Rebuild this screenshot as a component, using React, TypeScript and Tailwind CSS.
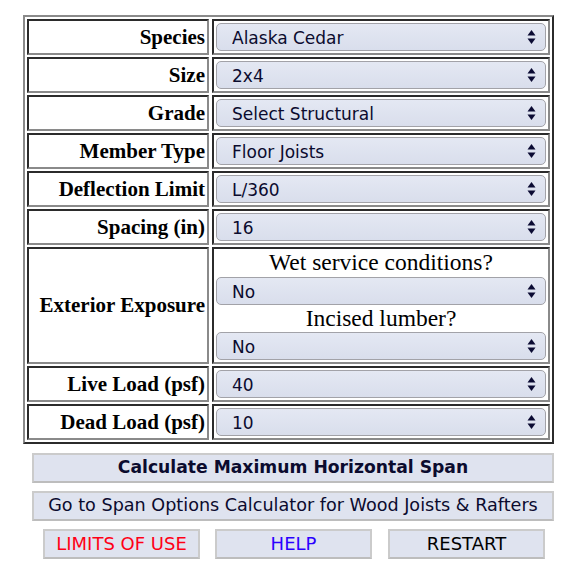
import React, { useState } from 'react';

const serif = { fontFamily: '"Liberation Serif", "Times New Roman", serif' };

const labelCell =
  'flex items-center justify-end pr-[2px] border-2 border-t-[#2b2b2b] border-l-[#2b2b2b] border-r-[#8a8a8a] border-b-[#8a8a8a] bg-white font-bold text-[21px] text-black leading-none';
const fieldCell =
  'flex flex-col p-[2px] border-2 border-t-[#2b2b2b] border-l-[#2b2b2b] border-r-[#8a8a8a] border-b-[#8a8a8a] bg-white';

const Arrows = () => (
  <svg
    className="pointer-events-none absolute right-[10px] top-1/2 -translate-y-1/2"
    width="9"
    height="16"
    viewBox="0 0 9 16"
  >
    <path d="M4.5 1 L8.5 6.5 L0.5 6.5 Z" fill="#0b0b33" />
    <path d="M4.5 15 L8.5 9.5 L0.5 9.5 Z" fill="#0b0b33" />
  </svg>
);

interface SelectProps {
  value: string;
  options: string[];
  onChange: (v: string) => void;
}

const Select: React.FC<SelectProps> = ({ value, options, onChange }) => (
  <div className="relative h-[28px] w-full">
    <select
      value={value}
      onChange={(e) => onChange(e.target.value)}
      className="h-full w-full appearance-none rounded-[5px] border border-[#a2a2a8] bg-gradient-to-b from-[#e4e8f3] to-[#d9deec] pl-[15px] pt-[2px] text-[17px] text-[#0b0b2e] outline-none"
      style={{ fontFamily: '"DejaVu Sans", Verdana, sans-serif' }}
    >
      {options.map((o) => (
        <option key={o} value={o}>
          {o}
        </option>
      ))}
    </select>
    <Arrows />
  </div>
);

const rows = [
  { key: 'species', label: 'Species', options: ['Alaska Cedar', 'Douglas Fir-Larch', 'Hem-Fir', 'Spruce-Pine-Fir'] },
  { key: 'size', label: 'Size', options: ['2x4', '2x6', '2x8', '2x10', '2x12'] },
  { key: 'grade', label: 'Grade', options: ['Select Structural', 'No. 1', 'No. 2', 'No. 3'] },
  { key: 'member', label: 'Member Type', options: ['Floor Joists', 'Ceiling Joists', 'Rafters'] },
  { key: 'deflection', label: 'Deflection Limit', options: ['L/360', 'L/240', 'L/180'] },
  { key: 'spacing', label: 'Spacing (in)', options: ['16', '12', '19.2', '24'] },
];

const loadRows = [
  { key: 'live', label: 'Live Load (psf)', options: ['40', '30', '50'] },
  { key: 'dead', label: 'Dead Load (psf)', options: ['10', '15', '20'] },
];

const btn =
  'h-[30px] border-2 border-[#cbcbcb] border-b-[#bdbdbd] bg-[#dfe3ef] leading-none';

export default function App() {
  const [vals, setVals] = useState<Record<string, string>>({
    species: 'Alaska Cedar',
    size: '2x4',
    grade: 'Select Structural',
    member: 'Floor Joists',
    deflection: 'L/360',
    spacing: '16',
    wet: 'No',
    incised: 'No',
    live: '40',
    dead: '10',
  });
  const set = (k: string) => (v: string) => setVals((s) => ({ ...s, [k]: v }));

  return (
    <div className="min-h-[568px] w-[576px] bg-white pt-[15px]">
      <div
        className="ml-[23px] grid w-[531px] grid-cols-[182px_338px] gap-x-[3px] gap-y-[2px] border-2 border-t-[#8a8a8a] border-l-[#8a8a8a] border-r-[#2b2b2b] border-b-[#2b2b2b] p-[2px]"
        style={serif}
      >
        {rows.map((r) => (
          <React.Fragment key={r.key}>
            <div className={`${labelCell} h-[36px]`}>{r.label}</div>
            <div className={`${fieldCell} h-[36px]`}>
              <Select value={vals[r.key]} options={r.options} onChange={set(r.key)} />
            </div>
          </React.Fragment>
        ))}

        <div className={`${labelCell} h-[117px]`}>Exterior Exposure</div>
        <div className={`${fieldCell} h-[117px] pt-0`}>
          <div className="flex h-[28px] items-center justify-center text-[23.5px] leading-none text-black">
            Wet service conditions?
          </div>
          <Select value={vals.wet} options={['No', 'Yes']} onChange={set('wet')} />
          <div className="flex h-[27px] items-center justify-center text-[23.5px] leading-none text-black">
            Incised lumber?
          </div>
          <Select value={vals.incised} options={['No', 'Yes']} onChange={set('incised')} />
        </div>

        {loadRows.map((r) => (
          <React.Fragment key={r.key}>
            <div className={`${labelCell} h-[36px]`}>{r.label}</div>
            <div className={`${fieldCell} h-[36px]`}>
              <Select value={vals[r.key]} options={r.options} onChange={set(r.key)} />
            </div>
          </React.Fragment>
        ))}
      </div>

      <div
        className="ml-[32px] mt-[9px] flex w-[522px] flex-col gap-[8px]"
        style={{ fontFamily: '"DejaVu Sans", Verdana, sans-serif' }}
      >
        <button className={`${btn} text-[17.2px] font-bold text-[#0b0b2e]`}>Calculate Maximum Horizontal Span</button>
        <button className={`${btn} text-[17.6px] text-[#0b0b2e]`}>
          Go to Span Options Calculator for Wood Joists &amp; Rafters
        </button>
        <div className="grid grid-cols-3">
          <button className={`${btn} ml-[11px] w-[157px] text-[18px] text-[#ff0016]`}>LIMITS OF USE</button>
          <button className={`${btn} ml-[9px] w-[157px] text-[18px] text-[#2a00ff]`}>HELP</button>
          <button className={`${btn} ml-[8px] w-[157px] text-[18px] text-black`}>RESTART</button>
        </div>
      </div>
    </div>
  );
}
